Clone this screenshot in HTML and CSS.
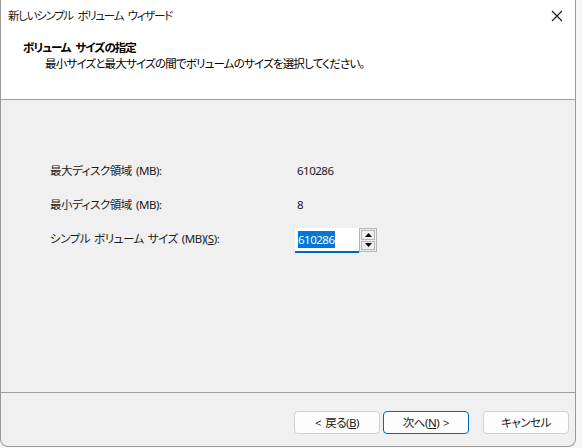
FILE: index.html
```html
<!DOCTYPE html>
<html lang="ja">
<head>
<meta charset="utf-8">
<title>新しいシンプル ボリューム ウィザード</title>
<link rel="stylesheet" href="styles.css">
</head>
<body>
<div class="window">
  <div class="top">
    <div class="titlebar">
      <span class="title">新しいシンプル ボリューム ウィザード</span>
      <span class="close">
        <svg width="12" height="12" viewBox="0 0 12 12"><path d="M1 1 L11 11 M11 1 L1 11" stroke="#1a1a1a" stroke-width="1.1" fill="none"/></svg>
      </span>
    </div>
    <div class="header">
      <div class="heading">ボリューム サイズの指定</div>
      <div class="subheading">最小サイズと最大サイズの間でボリュームのサイズを選択してください。</div>
    </div>
  </div>
  <div class="content">
    <div class="form">
      <div class="label">最大ディスク領域 (MB):</div>
      <div class="value">610286</div>
      <div class="label">最小ディスク領域 (MB):</div>
      <div class="value">8</div>
      <div class="label">シンプル ボリューム サイズ (MB)(<u>S</u>):</div>
      <div class="spin">
        <div class="input"><span class="sel">610286</span></div>
        <div class="spinbtns">
          <div class="sbtn"><svg width="7" height="4" viewBox="0 0 7 4"><path d="M3.5 0 L7 4 L0 4 Z" fill="#000"/></svg></div>
          <div class="sbtn"><svg width="7" height="4" viewBox="0 0 7 4"><path d="M0 0 L7 0 L3.5 4 Z" fill="#000"/></svg></div>
        </div>
      </div>
    </div>
  </div>
  <div class="footer">
    <button class="btn">&lt; 戻る(<u>B</u>)</button>
    <button class="btn default">次へ(<u>N</u>) &gt;</button>
    <button class="btn cancel">キャンセル</button>
  </div>
</div>
</body>
</html>
```
FILE: styles.css
```css
html, body {
  margin: 0;
  padding: 0;
  background: #f7f7f7;
}
body {
  font-family: "Noto Sans", "Noto Sans CJK JP", sans-serif;
  font-size: 11.5px;
  letter-spacing: -0.5px;
  word-spacing: 1.5px;
  color: #000;
  font-feature-settings: "palt";
  width: 582px;
  height: 448px;
  overflow: hidden;
}
.window {
  width: 576px;
  height: 447px;
  box-sizing: border-box;
  border: 1px solid #9a9a9a;
  border-top: none;
  border-radius: 0 0 8px 8px;
  overflow: hidden;
  display: flex;
  flex-direction: column;
  background: #f0f0f0;
}
.top {
  background: #fff;
  height: 99px;
  border-bottom: 1px solid #a0a0a0;
}
.titlebar {
  height: 31px;
  display: flex;
  align-items: center;
  justify-content: space-between;
  padding: 0 8px 0 7px;
  line-height: 16px;
}
.title {
  color: #1a1a1a;
  letter-spacing: -1.3px;
  word-spacing: 3px;
}
.close {
  display: flex;
  width: 14px;
  justify-content: center;
  margin-right: 3px;
}
.header {
  padding: 9px 0 0 22px;
}
.heading {
  font-weight: bold;
  line-height: 16px;
  letter-spacing: -1px;
  word-spacing: 3px;
}
.subheading {
  padding-left: 22px;
  line-height: 16px;
  letter-spacing: -0.8px;
}
.content {
  height: 293px;
  box-sizing: border-box;
  border-bottom: 1px solid #a0a0a0;
  padding: 58px 0 0 49px;
}
.form {
  display: grid;
  grid-template-columns: 245px auto;
  grid-auto-rows: 26px;
  row-gap: 8px;
  align-items: center;
}
.label, .value {
  line-height: 16px;
  color: #1a1a1a;
}
.label {
  letter-spacing: -0.45px;
}
.value {
  padding-left: 2px;
}
.spin {
  display: flex;
  align-items: flex-start;
  height: 26px;
  padding-top: 2px;
  box-sizing: border-box;
}
.input {
  width: 64px;
  height: 25px;
  box-sizing: border-box;
  background: #fff;
  border-bottom: 2px solid #0067c0;
  padding: 3px 0 0 3px;
  line-height: 17px;
}
.sel {
  background: #0078d7;
  color: #fff;
  display: inline-block;
  padding: 0 1px 0 0;
}
.spinbtns {
  width: 18px;
  height: 24px;
  box-sizing: border-box;
  border: 1px solid #b4b4b4;
  display: flex;
  flex-direction: column;
  gap: 1px;
  padding: 1px;
  background: #f0f0f0;
}
.sbtn {
  flex: 1;
  border: 1px solid #b4b4b4;
  background: #f0f0f0;
  display: flex;
  align-items: center;
  justify-content: center;
}
.footer {
  flex: 1;
  display: flex;
  align-items: flex-start;
  padding: 18px 0 0 293px;
}
.btn {
  font-family: inherit;
  font-size: 11.5px;
  letter-spacing: -0.5px;
  word-spacing: 1.5px;
  font-feature-settings: "palt";
  width: 86px;
  height: 23px;
  box-sizing: border-box;
  border: 1px solid #d0d0d0;
  border-radius: 4px;
  background: #fdfdfd;
  color: #1a1a1a;
  padding: 0;
  line-height: 16px;
}
.btn + .btn {
  margin-left: 3px;
}
.btn.default {
  border-color: #0067c0;
}
.btn.cancel {
  margin-left: 14px;
}
```
